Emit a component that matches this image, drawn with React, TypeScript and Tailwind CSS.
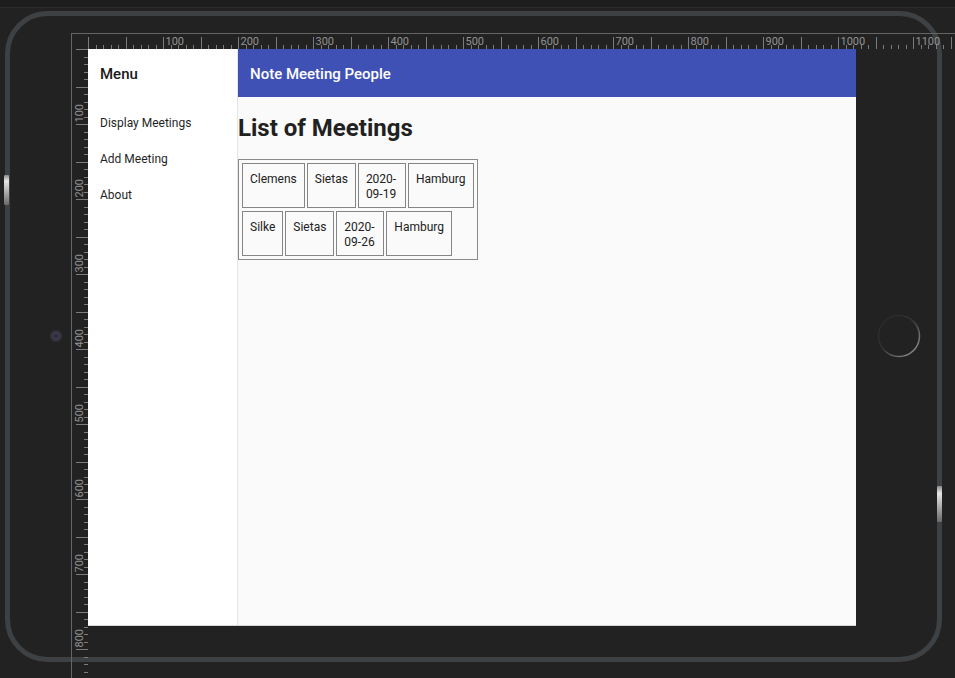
import React from 'react';

const navItems = ['Display Meetings', 'Add Meeting', 'About'];

const meetings = [
  { first: 'Clemens', last: 'Sietas', date: '2020-09-19', city: 'Hamburg' },
  { first: 'Silke', last: 'Sietas', date: '2020-09-26', city: 'Hamburg' },
];

// device frame, rulers and hardware buttons of the emulator
const DeviceChrome = () => {
  const hTicks: React.ReactNode[] = [];
  for (let u = 0; u <= 1160; u += 10) {
    const x = Math.round(88 + u * 0.75) + 0.5;
    const len = u % 50 === 0 ? 12 : 4;
    hTicks.push(<line key={'h' + u} x1={x} x2={x} y1={49} y2={49 - len} stroke="#7c7c7c" strokeWidth={1} />);
    if (u % 100 === 0 && u > 0) {
      hTicks.push(
        <text key={'ht' + u} x={x + 2} y={45} fontSize={11} fill="#939393" fontFamily="Roboto, 'Liberation Sans', sans-serif">
          {u}
        </text>
      );
    }
  }

  const vTicks: React.ReactNode[] = [];
  for (let u = 0; u <= 840; u += 10) {
    const y = Math.round(49 + u * 0.75) + 0.5;
    const len = u % 50 === 0 ? 12 : 4;
    vTicks.push(<line key={'v' + u} y1={y} y2={y} x1={88} x2={88 - len} stroke="#7c7c7c" strokeWidth={1} />);
    if (u % 100 === 0 && u > 0) {
      vTicks.push(
        <text
          key={'vt' + u}
          transform={`translate(83 ${y - 2}) rotate(-90)`}
          fontSize={11}
          fill="#939393"
          fontFamily="Roboto, 'Liberation Sans', sans-serif"
        >
          {u}
        </text>
      );
    }
  }

  return (
    <svg className="absolute left-0 top-0" width={955} height={678} viewBox="0 0 955 678">
      <defs>
        <linearGradient id="home" x1="0" y1="0" x2="1" y2="1">
          <stop offset="0" stopColor="#262626" />
          <stop offset="0.45" stopColor="#333" />
          <stop offset="1" stopColor="#a0a0a0" />
        </linearGradient>
        <linearGradient id="btn" x1="0" y1="0" x2="0" y2="1">
          <stop offset="0" stopColor="#8a8a8a" />
          <stop offset="0.2" stopColor="#e6e6e6" />
          <stop offset="1" stopColor="#6a6a6a" />
        </linearGradient>
      </defs>
      <rect x={0} y={0} width={955} height={7} fill="#1d1d1d" />
      <line x1={0} x2={955} y1={7.5} y2={7.5} stroke="#2c2c2c" />
      <rect x={7.5} y={13.5} width={932} height={646} rx={40} fill="none" stroke="#3e4144" strokeWidth={5} />
      <rect x={4} y={175} width={5} height={30} rx={1} fill="url(#btn)" />
      <rect x={937} y={486} width={5} height={36} rx={1} fill="url(#btn)" />
      <circle cx={899} cy={336} r={20.5} fill="none" stroke="url(#home)" strokeWidth={1.5} />
      <circle cx={56} cy={336} r={6} fill="#35343d" />
      <circle cx={56} cy={336} r={2.5} fill="#2a2840" stroke="#4d4a66" strokeWidth={0.8} />
      <line x1={71} x2={955} y1={33.5} y2={33.5} stroke="#656565" />
      <line x1={71.5} x2={71.5} y1={33} y2={678} stroke="#656565" />
      {hTicks}
      {vTicks}
    </svg>
  );
};

const Cell = ({ children, narrow }: { children: React.ReactNode; narrow?: boolean }) => (
  <div
    className={`border border-[#858585] pt-[8px] pb-[5px] leading-[15px] text-[12px] text-[#212121] ${
      narrow ? 'w-[48px] px-[7px]' : 'px-[7px]'
    }`}
  >
    {children}
  </div>
);

export default function App() {
  return (
    <div className="relative w-[955px] h-[678px] overflow-hidden bg-[#222222]">
      <DeviceChrome />

      <div className="absolute left-[88px] top-[49px] w-[768px] h-[577px] flex bg-[#fafafa] border-b border-[#d6d6d6] font-['Roboto','Liberation_Sans',sans-serif]">
        <aside className="w-[150px] shrink-0 bg-white border-r border-[#e6e6e6] flex flex-col">
          <div className="h-[48px] flex items-center pl-[12px] pt-[3px] text-[15px] font-medium text-[#1a1a1a]">Menu</div>
          <nav className="pt-[8px] flex flex-col">
            {navItems.map((item) => (
              <div key={item} className="h-[36px] flex items-center pl-[12px] text-[12px] text-[#1f1f1f]">
                {item}
              </div>
            ))}
          </nav>
        </aside>

        <main className="flex-1 flex flex-col">
          <header className="h-[48px] shrink-0 bg-[#3f51b5] flex items-center pl-[12px] pt-[2px] text-[15px] font-medium text-white">
            Note Meeting People
          </header>
          <div className="flex flex-col items-start">
            <h1 className="mt-[17px] mb-[17px] text-[24px] leading-[28px] font-bold text-[#212121]">List of Meetings</h1>
            <div className="inline-flex flex-col items-start gap-[3px] p-[3px] border border-[#8a8a8a]">
              {meetings.map((m) => (
                <div key={m.date} className="flex gap-[2px]">
                  <Cell>{m.first}</Cell>
                  <Cell>{m.last}</Cell>
                  <Cell narrow>{m.date}</Cell>
                  <Cell>{m.city}</Cell>
                </div>
              ))}
            </div>
          </div>
        </main>
      </div>
    </div>
  );
}
